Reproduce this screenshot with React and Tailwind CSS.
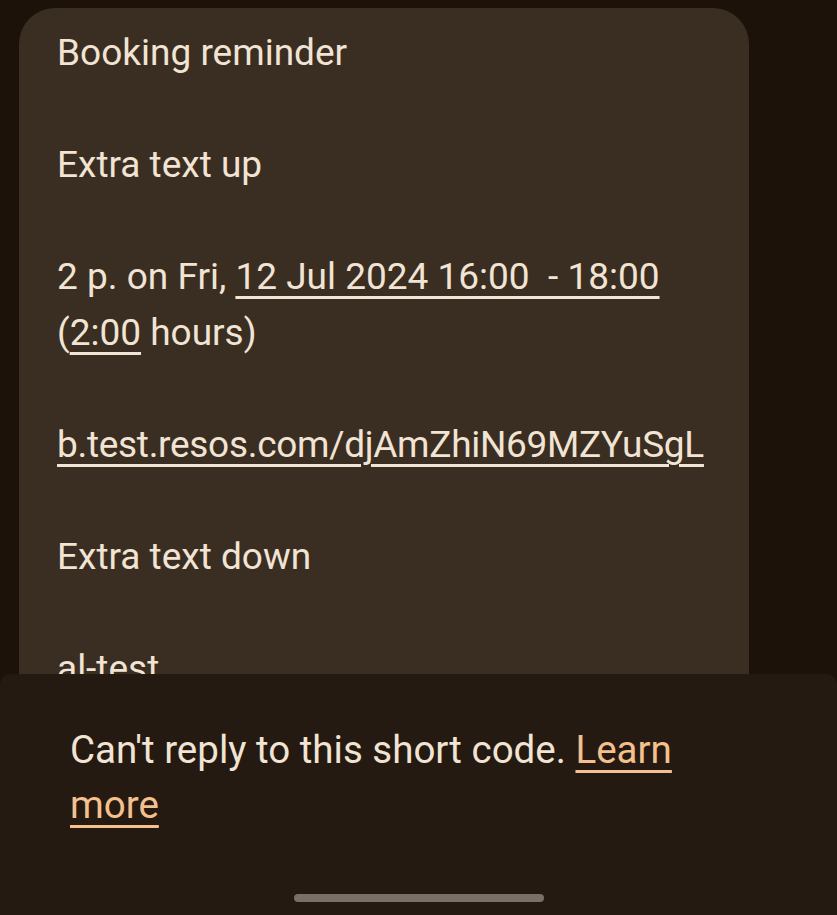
import React from "react";

const font = { fontFamily: "Roboto, 'Noto Sans', sans-serif" };

export default function App() {
  return (
    <div className="relative h-[915px] w-[837px] overflow-hidden bg-[#1c120a]" style={font}>
      <div className="ml-[19px] mt-[8px] h-[1000px] w-[730px] rounded-t-[36px] bg-[#3a2e22] pl-[38px] pt-[17px] text-[37px] leading-[56px] text-[#f2e4d4]">
        <div>Booking reminder</div>
        <div>&nbsp;</div>
        <div>Extra text up</div>
        <div>&nbsp;</div>
        <div className="whitespace-pre">
          2 p. on Fri, <span className="underline decoration-[3px] underline-offset-[7px]">12 Jul 2024 16:00  - 18:00</span>
        </div>
        <div>
          (<span className="underline decoration-[3px] underline-offset-[7px]">2:00</span> hours)
        </div>
        <div>&nbsp;</div>
        <div className="tracking-[-0.3px] underline decoration-[3px] underline-offset-[7px]">b.test.resos.com/djAmZhiN69MZYuSgL</div>
        <div>&nbsp;</div>
        <div>Extra text down</div>
        <div>&nbsp;</div>
        <div>al-test</div>
      </div>
      <div className="absolute bottom-0 left-0 right-0 flex h-[241px] flex-col rounded-t-[10px] bg-[#241a12]">
        <div className="pl-[70px] pr-[110px] pt-[48px] text-[38.5px] leading-[55px] text-[#f2e4d4]">
          <div>
            Can't reply to this short code.{" "}
            <span className="text-[#f4c08d] underline decoration-[3px] underline-offset-[7px]">Learn</span>
          </div>
          <div>
            <span className="text-[#f4c08d] underline decoration-[3px] underline-offset-[7px]">more</span>
          </div>
        </div>
        <div className="mt-auto mb-[13px] flex justify-center">
          <div className="h-[8px] w-[250px] rounded-full bg-[#7a6f66]" />
        </div>
      </div>
    </div>
  );
}
